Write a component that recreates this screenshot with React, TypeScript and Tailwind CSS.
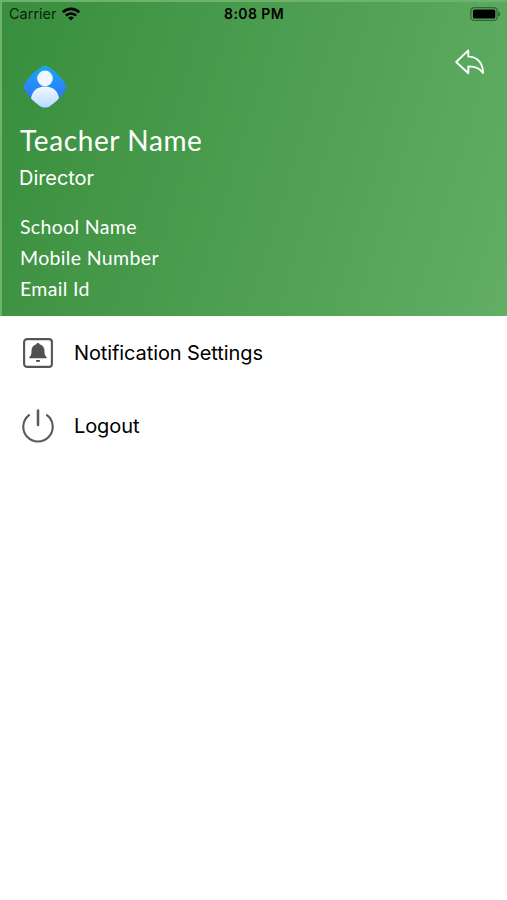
import type { ReactNode } from "react";

const CONTACT_LINES = ["School Name", "Mobile Number", "Email Id"];

function WifiIcon() {
  return (
    <svg className="h-[14px] w-[18px]" viewBox="0 0 18 14" fill="none" stroke="currentColor" strokeWidth="2.7">
      <path d="M0.9 5.3a11.4 11.4 0 0 1 16.2 0" />
      <path d="M3.9 8.6a7.2 7.2 0 0 1 10.2 0" />
      <path d="M9 13.6 6.2 10.8a4 4 0 0 1 5.6 0Z" fill="currentColor" stroke="none" />
    </svg>
  );
}

function BatteryIcon() {
  return (
    <svg className="h-[14px] w-[31px]" viewBox="0 0 31 14">
      <rect x="0.9" y="0.7" width="26.2" height="12.6" rx="3.4" fill="none" stroke="#000" strokeOpacity="0.4" strokeWidth="1.3" />
      <rect x="2.9" y="2.4" width="22.4" height="9.2" rx="1.6" fill="#000" />
      <path d="M28.4 4.4c2.1.9 2.1 4.3 0 5.2Z" fill="#000" fillOpacity="0.5" />
    </svg>
  );
}

function BackIcon() {
  return (
    <svg className="h-[26px] w-[30px]" viewBox="0 0 30 26" fill="none" stroke="#fff" strokeWidth="1.9" strokeLinejoin="round">
      <path d="M1.2 13 13.3 1.4V7.6C22.5 7.8 28 14 28 23.9C24.5 18.8 20 17.2 13.3 17.4V24.2Z" />
    </svg>
  );
}

function Avatar() {
  return (
    <svg className="h-[44px] w-[44px]" viewBox="0 0 44 44">
      <defs>
        <linearGradient id="avatar-bg" x1="0" y1="0" x2="0" y2="1">
          <stop offset="0" stopColor="#12abdf" />
          <stop offset="0.3" stopColor="#2196fa" />
          <stop offset="1" stopColor="#3a62f0" />
        </linearGradient>
        <linearGradient id="avatar-person" x1="0" y1="0" x2="0" y2="1">
          <stop offset="0" stopColor="#f2f9ff" />
          <stop offset="1" stopColor="#b9dafd" />
        </linearGradient>
        <clipPath id="avatar-clip">
          <path d="M17.5 2.6Q22 -0.9 26.5 2.6Q35.5 8.5 41.4 17.5Q44.9 22 41.4 26.5Q35.5 35.5 26.5 41.4Q22 44.9 17.5 41.4Q8.5 35.5 2.6 26.5Q-0.9 22 2.6 17.5Q8.5 8.5 17.5 2.6Z" />
        </clipPath>
      </defs>
      <g clipPath="url(#avatar-clip)">
        <rect width="44" height="44" fill="url(#avatar-bg)" />
        <path d="M8 42.4V35C8 26.5 14 21.4 22 21.4S36 26.5 36 35V42.4Z" fill="url(#avatar-person)" />
        <circle cx="22" cy="13.4" r="7.8" fill="#f0f8ff" />
      </g>
    </svg>
  );
}

function BellIcon() {
  return (
    <svg className="h-[30px] w-[30px]" viewBox="0 0 30 30">
      <rect x="1.1" y="1.1" width="27.8" height="27.8" rx="3" fill="none" stroke="#555" strokeWidth="2.1" />
      <path d="M15 5c.9 0 1.5.6 1.6 1.3 3.3.8 4.9 3.3 4.9 6.8 0 3.4.5 4.7 2.1 6v1.2H6.4v-1.2c1.6-1.3 2.1-2.6 2.1-6 0-3.5 1.6-6 4.9-6.8.1-.7.7-1.3 1.6-1.3Z" fill="#505050" />
      <path d="M12.8 21.9h4.4a2.2 2.2 0 0 1-4.4 0Z" fill="#505050" />
    </svg>
  );
}

function PowerIcon() {
  return (
    <svg className="h-[34px] w-[32px]" viewBox="0 0 32 34" fill="none" stroke="#5a5a5a" strokeWidth="2.1" strokeLinecap="round">
      <path d="M16 1.4V16" strokeWidth="2.5" />
      <path d="M7 6.2A14.7 14.7 0 1 0 25 6.2" />
    </svg>
  );
}

function MenuRow({ icon, children }: { icon: ReactNode; children: ReactNode }) {
  return (
    <button className="flex h-[73px] w-full items-center pl-[21px] text-left text-[20px] tracking-[-0.1px] text-black">
      <span className="flex w-[33px] justify-center">{icon}</span>
      <span className="ml-[20px]">{children}</span>
    </button>
  );
}

export default function App() {
  return (
    <main className="h-[900px] w-[507px] overflow-hidden bg-white font-['Inter',sans-serif]">
      <header className="h-[316px] border-t-2 border-l-2 border-[#6eb272] bg-[linear-gradient(107deg,#388e3c_0%,#61ae64_100%)] bg-origin-border text-white">
        <div className="grid h-[23px] grid-cols-3 items-center pl-[7px] pr-[6px] text-black">
          <div className="flex items-center gap-[5px]">
            <span className="text-[14.5px] text-black/80">Carrier</span>
            <WifiIcon />
          </div>
          <span className="-ml-[2px] text-center text-[14px] font-semibold tracking-[0.4px]">8:08 PM</span>
          <div className="flex justify-end">
            <BatteryIcon />
          </div>
        </div>

        <div className="flex justify-end pt-[24px] pr-[22px]">
          <button aria-label="Back">
            <BackIcon />
          </button>
        </div>

        <div className="-mt-[10px] pl-[18px]">
          <div className="pl-[3px]">
            <Avatar />
          </div>
          <h1 className="mt-[11px] font-['Lato',sans-serif] text-[28px] leading-[40px] tracking-[0.62px]">Teacher Name</h1>
          <p className="-ml-px mt-[4px] text-[20px] leading-[28px] tracking-[-0.05px]">Director</p>
          <div className="mt-[19px] font-['Lato',sans-serif] text-[19.5px] leading-[31px] tracking-[0.35px]">
            {CONTACT_LINES.map((label) => (
              <p key={label}>{label}</p>
            ))}
          </div>
        </div>
      </header>

      <nav>
        <MenuRow icon={<BellIcon />}>Notification Settings</MenuRow>
        <MenuRow icon={<PowerIcon />}>Logout</MenuRow>
      </nav>
    </main>
  );
}
